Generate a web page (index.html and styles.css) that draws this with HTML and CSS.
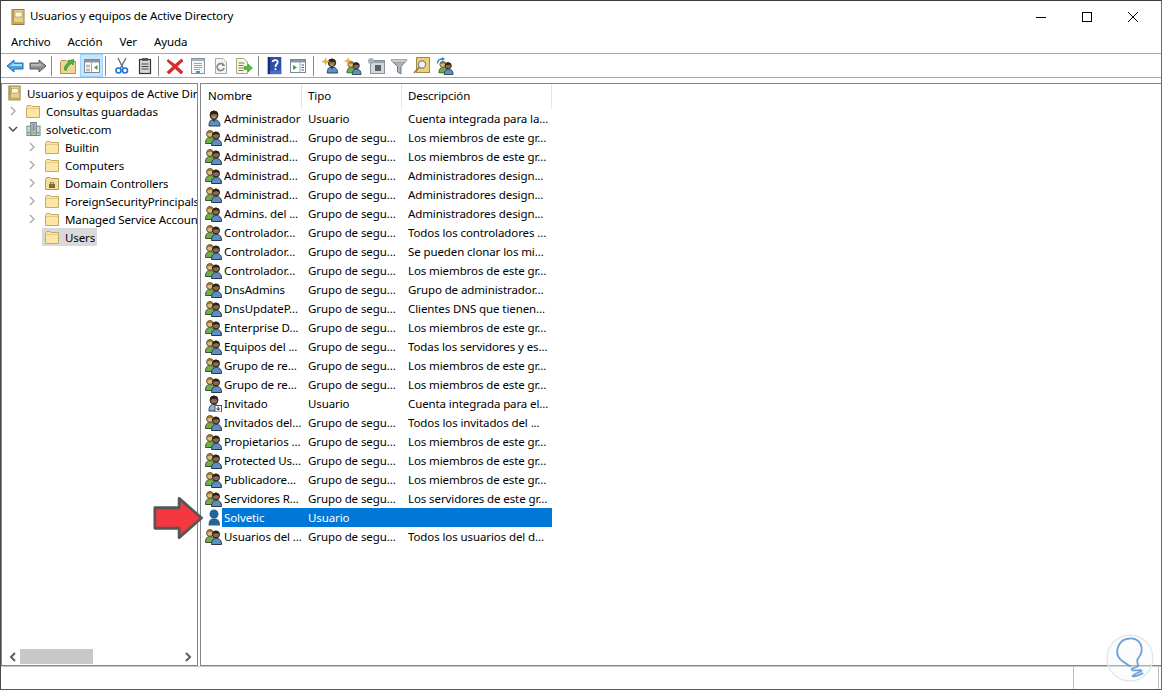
FILE: index.html
```html
<!DOCTYPE html>
<html lang="es">
<head>
<meta charset="utf-8">
<title>Usuarios y equipos de Active Directory</title>
<link rel="stylesheet" href="styles.css">
</head>
<body>
<svg class="defs" width="0" height="0" aria-hidden="true">
  <defs>
    <pattern id="dither" width="2" height="2" patternUnits="userSpaceOnUse">
      <rect width="2" height="2" fill="#2f8fe0"/>
      <rect width="1" height="1" fill="#1a2b3c"/>
      <rect x="1" y="1" width="1" height="1" fill="#24405c"/>
    </pattern>
    <symbol id="book" viewBox="0 0 14 16">
      <rect x="1" y="0.5" width="12" height="15" fill="#e8cf84" stroke="#8d7a45"/>
      <rect x="1" y="0.5" width="2" height="15" fill="#b59a52"/>
      <rect x="4" y="3" width="7" height="5" fill="#fdf8dc" stroke="#a48d4e" stroke-width=".6"/>
      <rect x="1.5" y="13" width="11" height="2" fill="#c4a85e"/>
    </symbol>
    <symbol id="folder" viewBox="0 0 14 13">
      <path d="M.5 2.5V12.5H13.5V1.5H6L5 .5H1.500Z" fill="#fbe6a6" stroke="#c8a862"/>
      <path d="M1 3.500H13" stroke="#e6cb86"/>
    </symbol>
    <symbol id="ou" viewBox="0 0 14 13">
      <path d="M.5 2.500V12.500H13.500V1.500H6L5 .5H1.500Z" fill="#f6dd9a" stroke="#b69a58"/>
      <rect x="4" y="7" width="6" height="4" fill="#7c6a3a"/>
      <rect x="5.500" y="5.500" width="3" height="2" fill="#d9c27c" stroke="#5e5030" stroke-width=".5"/>
    </symbol>
    <symbol id="domain" viewBox="0 0 16 16">
      <rect x="5" y="1" width="6" height="14" fill="#bcc3c9" stroke="#6d7680"/>
      <rect x="1" y="5" width="4" height="10" fill="#d2d7db" stroke="#7b848c"/>
      <rect x="11" y="5" width="4" height="10" fill="#d2d7db" stroke="#7b848c"/>
      <path d="M7 3h2M7 5h2M7 7h2M7 9h2" stroke="#4d5a66"/>
      <rect x="2" y="11" width="2" height="2" fill="#57c24a"/>
      <rect x="12" y="11" width="2" height="2" fill="#57c24a"/>
      <rect x="7" y="11" width="2" height="2" fill="#57c24a"/>
    </symbol>
    <symbol id="user" viewBox="0 0 16 17">
      <path d="M3.500 16c0-4 1-6.500 5-6.500s6 2.500 6 6.500Z" fill="#5c8fc4" stroke="#2a3a4c"/>
      <path d="M6.500 9.500 8.500 12 10.500 9.500Z" fill="#2a3440"/>
      <circle cx="8.500" cy="5" r="4" fill="#8a6a4c" stroke="#231e1a"/>
      <path d="M4.800 5C4.500 1.500 7 .8 8.500 .8S12.500 2 12.200 5C10.500 3.500 7 3.500 4.800 5Z" fill="#2c2218"/>
      <path d="M7 6h3v2.500H7Z" fill="#b89270"/>
    </symbol>
    <symbol id="guest" viewBox="0 0 16 17">
      <path d="M3.500 16c0-4 1-6.500 5-6.500s6 2.500 6 6.500Z" fill="#8fb2d6" stroke="#2a3a4c"/>
      <circle cx="8.500" cy="5" r="4" fill="#8a6a4c" stroke="#231e1a"/>
      <path d="M4.800 5C4.500 1.500 7 .8 8.500 .8S12.500 2 12.200 5C10.500 3.500 7 3.500 4.800 5Z" fill="#2c2218"/>
      <rect x="9.500" y="10.500" width="6.500" height="6.500" fill="#fff" stroke="#555"/>
      <path d="M12.700 11.500v3.500M11 13.500l1.700 1.700 1.700-1.700" stroke="#222" fill="none"/>
    </symbol>
    <symbol id="group" viewBox="0 0 17 17">
      <path d="M.5 14.500c0-4 1.500-6 4.500-6S9.500 10 9.500 14.500Z" fill="#6fae4a" stroke="#37552a"/>
      <circle cx="5" cy="5" r="3.400" fill="#dcb67e" stroke="#5e4e2c"/>
      <path d="M1.800 4.800C1.800 2 3.500 1.300 5 1.300S8.200 2.500 8.200 4.800C6.500 3.500 4 3.500 1.800 4.800Z" fill="#8d7430"/>
      <path d="M6.500 16.500c0-4 1.500-6 5-6s5 2 5 6Z" fill="#5c8fc4" stroke="#2a3a4c"/>
      <circle cx="11" cy="6.500" r="3.500" fill="#8a6a4c" stroke="#231e1a"/>
      <path d="M7.600 6.300C7.400 3.300 9.500 2.800 11 2.800s3.600 1 3.400 3.500C12.800 5 10 5 7.600 6.300Z" fill="#2c2218"/>
    </symbol>
    <symbol id="user-sel" viewBox="0 0 16 17">
      <path d="M3 16.500c0-4.500 1.500-7 5.500-7s6 2.500 6 7Z" fill="url(#dither)"/>
      <circle cx="8.500" cy="5" r="4.500" fill="url(#dither)"/>
    </symbol>
    <symbol id="i-back" viewBox="0 0 18 18">
      <path d="M1 9 8 3V6H17V12H8V15Z" fill="#4aa3e8" stroke="#1d6cb0"/>
      <path d="M4 9 8 5.500V7H16V9Z" fill="#a5dcff"/>
    </symbol>
    <symbol id="i-forward" viewBox="0 0 18 18">
      <path d="M17 9 10 3V6H1V12H10V15Z" fill="#8c8f94" stroke="#55585c"/>
      <path d="M2 7H10V5.500L14 9H2Z" fill="#b5b7ba"/>
    </symbol>
    <symbol id="i-up" viewBox="0 0 18 18">
      <path d="M1.500 5.500V16.500H16.500V4.500H8L7 3.500H2.500Z" fill="#f3d58f" stroke="#b69250"/>
      <path d="M5 12C6 8 8 6 10 5.500L9 3.500 15 2.500 14 8 12.500 6.500C10 8 8 10 7 14Z" fill="#46b545" stroke="#2c8030" stroke-width=".6"/>
    </symbol>
    <symbol id="i-pane" viewBox="0 0 18 18">
      <rect x="1.500" y="2.500" width="15" height="13" fill="#fff" stroke="#7b8895"/>
      <rect x="2" y="3" width="14" height="2.500" fill="#8a98a6"/>
      <path d="M8.500 6v9" stroke="#9aa5b0"/>
      <path d="M3.500 8h3v2h-3zM3.500 12h3v2h-3z" fill="#cfd6dc" stroke="#7b8895" stroke-width=".5"/>
      <path d="M14.500 8v5L11 10.500Z" fill="#3fa24a"/>
    </symbol>
    <symbol id="i-cut" viewBox="0 0 18 18">
      <path d="M5 1 10 11M13 1 7.500 11" stroke="#6b7680" stroke-width="1.500" fill="none"/>
      <circle cx="5.500" cy="13.500" r="2.500" fill="none" stroke="#1e73d2" stroke-width="1.600"/>
      <circle cx="12" cy="13.500" r="2.500" fill="none" stroke="#1e73d2" stroke-width="1.600"/>
    </symbol>
    <symbol id="i-paste" viewBox="0 0 18 18">
      <rect x="3.500" y="2.500" width="11" height="14" fill="#d9d9d9" stroke="#333" stroke-width="1.200"/>
      <rect x="6" y="1" width="6" height="3" fill="#555"/>
      <path d="M5.500 7h7M5.500 9.500h7M5.500 12h7" stroke="#444"/>
    </symbol>
    <symbol id="i-del" viewBox="0 0 18 18">
      <path d="M2 2.500 9 7.500 15.500 2 17 4 11 9.500 17 15 15 17 9 11.500 3 17 1 15 7 9.500 1 4Z" fill="#e02a2a" stroke="#a81616" stroke-width=".6"/>
    </symbol>
    <symbol id="i-props" viewBox="0 0 18 18">
      <rect x="2.500" y="1.500" width="13" height="15" fill="#f4f5f6" stroke="#8c959e"/>
      <rect x="3" y="2" width="12" height="2" fill="#aab3bb"/>
      <path d="M5 6.500h8M5 8.500h8M5 10.500h8M5 12.500h6" stroke="#9aa5b0"/>
      <rect x="7" y="14" width="4" height="2" fill="#3a92d8"/>
    </symbol>
    <symbol id="i-refresh" viewBox="0 0 18 18">
      <path d="M3.500 1.500H11L14.500 5V16.500H3.500Z" fill="#f2f3f4" stroke="#a5abb1"/>
      <path d="M12 11A3.500 3.500 0 1 1 11 7.500" stroke="#7d858d" stroke-width="1.600" fill="none"/>
      <path d="M10 5v4h3.500Z" fill="#7d858d"/>
    </symbol>
    <symbol id="i-export" viewBox="0 0 18 18">
      <path d="M1.500 1.500H9L12.500 5V16.500H1.500Z" fill="#fbf6d8" stroke="#b0a878"/>
      <path d="M3.500 6h6M3.500 8.500h5M3.500 11h5M3.500 13.500h5" stroke="#77786a"/>
      <path d="M9 9.500h4V7l4.500 4-4.500 4v-2.500H9Z" fill="#54c03f" stroke="#2e8a28" stroke-width=".5"/>
    </symbol>
    <symbol id="i-help" viewBox="0 0 18 20">
      <rect x="1" y="0" width="15" height="19" fill="#2c4fa8"/>
      <rect x="1" y="0" width="2.500" height="19" fill="#1b2f70"/>
      <rect x="3.500" y="15" width="12.500" height="4" fill="#4a6ec8"/>
      <path d="M6.500 5.500C6.500 3 12 2.500 12 5.500 12 8 9.500 8 9.500 11" stroke="#fff" stroke-width="2" fill="none"/>
      <rect x="8.500" y="12.500" width="2" height="2" fill="#fff"/>
    </symbol>
    <symbol id="i-mmc" viewBox="0 0 18 18">
      <rect x="1.500" y="2.500" width="15" height="13" fill="#fff" stroke="#7b8895"/>
      <rect x="2" y="3" width="14" height="2.500" fill="#8a98a6"/>
      <path d="M11 6v9" stroke="#9aa5b0"/>
      <path d="M4 8v5L8 10.500Z" fill="#3fa24a"/>
      <path d="M12.500 8h2.500M12.500 10.500h2.500M12.500 13h2.500" stroke="#555"/>
    </symbol>
    <symbol id="spark" viewBox="0 0 8 8">
      <path d="M4 0 5 2.800 8 4 5 5.200 4 8 3 5.200 0 4 3 2.800Z" fill="#f0b030"/>
    </symbol>
    <symbol id="i-newuser" viewBox="0 0 18 18">
      <use href="#user" x="3" y="1" width="15" height="16"/>
      <use href="#spark" x="0" y="0" width="9" height="9"/>
    </symbol>
    <symbol id="i-newgroup" viewBox="0 0 18 18">
      <use href="#group" x="2" y="3" width="16" height="15"/>
      <use href="#spark" x="0" y="0" width="8" height="8"/>
    </symbol>
    <symbol id="i-newou" viewBox="0 0 18 18">
      <rect x="3.500" y="3.500" width="14" height="13" fill="#d4d8dc" stroke="#8a9098"/>
      <rect x="8" y="8" width="6" height="6" fill="#55606a"/>
      <rect x="4" y="4" width="13" height="2" fill="#9aa2aa"/>
      <circle cx="4" cy="4" r="3" fill="#aab0b6"/>
    </symbol>
    <symbol id="i-filter" viewBox="0 0 18 18">
      <path d="M1 3H17L11 9.500V17L7.500 15V9.500Z" fill="#aab4bd" stroke="#6d7882"/>
      <path d="M1 3H17L15.500 5H2.500Z" fill="#e4e8eb" stroke="#6d7882" stroke-width=".5"/>
    </symbol>
    <symbol id="i-find" viewBox="0 0 18 18">
      <rect x="3.500" y="0.500" width="13" height="15" fill="#efcf70" stroke="#a58b45"/>
      <circle cx="9" cy="7.500" r="3.600" fill="#eef3f5" stroke="#7c8690" stroke-width="1.200"/>
      <path d="M6.500 10 1 16" stroke="#8f7a62" stroke-width="1.800"/>
    </symbol>
    <symbol id="i-adduser" viewBox="0 0 18 18">
      <use href="#group" x="2" y="3" width="16" height="15"/>
      <path d="M1.500 6.500C1.500 3 4 1.500 7 2" stroke="#1e86dc" stroke-width="1.500" fill="none"/>
      <path d="M6 0l3 2-3 2Z" fill="#1e86dc"/>
    </symbol>
  </defs>
</svg>

<div class="window">
  <header class="titlebar">
    <svg class="title-icon"><use href="#book"/></svg>
    <span class="title-text">Usuarios y equipos de Active Directory</span>
    <div class="controls">
      <svg class="ctl" viewBox="0 0 46 32"><path d="M18 16.500H28" stroke="#000"/></svg>
      <svg class="ctl" viewBox="0 0 46 32"><rect x="18.500" y="11.500" width="9" height="9" fill="none" stroke="#000"/></svg>
      <svg class="ctl" viewBox="0 0 46 32"><path d="M18 11 28 21M28 11 18 21" stroke="#000" fill="none"/></svg>
    </div>
  </header>

  <nav class="menubar">
    <span class="menu-item">Archivo</span>
    <span class="menu-item">Acción</span>
    <span class="menu-item">Ver</span>
    <span class="menu-item">Ayuda</span>
  </nav>

  <div class="toolbar">
    <span class="tb"><svg><use href="#i-back"/></svg></span>
    <span class="tb"><svg><use href="#i-forward"/></svg></span>
    <span class="sep"></span>
    <span class="tb"><svg><use href="#i-up"/></svg></span>
    <span class="tb tb-on"><svg><use href="#i-pane"/></svg></span>
    <span class="sep"></span>
    <span class="tb"><svg><use href="#i-cut"/></svg></span>
    <span class="tb"><svg><use href="#i-paste"/></svg></span>
    <span class="sep"></span>
    <span class="tb"><svg><use href="#i-del"/></svg></span>
    <span class="tb"><svg><use href="#i-props"/></svg></span>
    <span class="tb"><svg><use href="#i-refresh"/></svg></span>
    <span class="tb"><svg><use href="#i-export"/></svg></span>
    <span class="sep sep-a"></span>
    <span class="tb"><svg><use href="#i-help"/></svg></span>
    <span class="tb"><svg><use href="#i-mmc"/></svg></span>
    <span class="sep sep-b"></span>
    <span class="tb"><svg><use href="#i-newuser"/></svg></span>
    <span class="tb"><svg><use href="#i-newgroup"/></svg></span>
    <span class="tb"><svg><use href="#i-newou"/></svg></span>
    <span class="tb"><svg><use href="#i-filter"/></svg></span>
    <span class="tb"><svg><use href="#i-find"/></svg></span>
    <span class="tb"><svg><use href="#i-adduser"/></svg></span>
  </div>

  <main class="panes">
    <aside class="tree-pane">
      <ul class="tree">
        <li class="node lv0"><svg class="n-book"><use href="#book"/></svg><span class="lbl">Usuarios y equipos de Active Directory</span></li>
        <li class="node lv1"><svg class="exp" viewBox="0 0 8 10"><path d="M2 1 6 5 2 9" fill="none" stroke="#a6a6a6" stroke-width="1.300"/></svg><svg class="n-folder"><use href="#folder"/></svg><span class="lbl">Consultas guardadas</span></li>
        <li class="node lv1"><svg class="exp exp-open" viewBox="0 0 10 8"><path d="M1 2 5 6 9 2" fill="none" stroke="#404040" stroke-width="1.300"/></svg><svg class="n-domain"><use href="#domain"/></svg><span class="lbl">solvetic.com</span></li>
        <li class="node lv2"><svg class="exp" viewBox="0 0 8 10"><path d="M2 1 6 5 2 9" fill="none" stroke="#a6a6a6" stroke-width="1.300"/></svg><svg class="n-folder"><use href="#folder"/></svg><span class="lbl">Builtin</span></li>
        <li class="node lv2"><svg class="exp" viewBox="0 0 8 10"><path d="M2 1 6 5 2 9" fill="none" stroke="#a6a6a6" stroke-width="1.300"/></svg><svg class="n-folder"><use href="#folder"/></svg><span class="lbl">Computers</span></li>
        <li class="node lv2"><svg class="exp" viewBox="0 0 8 10"><path d="M2 1 6 5 2 9" fill="none" stroke="#a6a6a6" stroke-width="1.300"/></svg><svg class="n-folder"><use href="#ou"/></svg><span class="lbl">Domain Controllers</span></li>
        <li class="node lv2"><svg class="exp" viewBox="0 0 8 10"><path d="M2 1 6 5 2 9" fill="none" stroke="#a6a6a6" stroke-width="1.300"/></svg><svg class="n-folder"><use href="#folder"/></svg><span class="lbl">ForeignSecurityPrincipals</span></li>
        <li class="node lv2"><svg class="exp" viewBox="0 0 8 10"><path d="M2 1 6 5 2 9" fill="none" stroke="#a6a6a6" stroke-width="1.300"/></svg><svg class="n-folder"><use href="#folder"/></svg><span class="lbl">Managed Service Accounts</span></li>
        <li class="node lv2 node-sel"><span class="exp-blank"></span><span class="sel-box"><svg class="n-folder"><use href="#folder"/></svg><span class="lbl">Users</span></span></li>
      </ul>
      <div class="hscroll">
        <svg class="sc-arrow" viewBox="0 0 8 10"><path d="M6 1 2 5 6 9" fill="none" stroke="#606060" stroke-width="2"/></svg>
        <div class="sc-track"><div class="sc-thumb"></div></div>
        <svg class="sc-arrow" viewBox="0 0 8 10"><path d="M2 1 6 5 2 9" fill="none" stroke="#606060" stroke-width="2"/></svg>
      </div>
    </aside>

    <section class="list-pane">
      <div class="list-head">
        <span class="col col-name">Nombre</span>
        <span class="col col-type">Tipo</span>
        <span class="col col-desc">Descripción</span>
      </div>
      <div class="row"><svg class="ic"><use href="#user"/></svg><div class="cells"><span class="c-name">Administrador</span><span class="c-type">Usuario</span><span class="c-desc">Cuenta integrada para la...</span></div></div>
      <div class="row"><svg class="ic"><use href="#group"/></svg><div class="cells"><span class="c-name">Administrad...</span><span class="c-type">Grupo de segu...</span><span class="c-desc">Los miembros de este gr...</span></div></div>
      <div class="row"><svg class="ic"><use href="#group"/></svg><div class="cells"><span class="c-name">Administrad...</span><span class="c-type">Grupo de segu...</span><span class="c-desc">Los miembros de este gr...</span></div></div>
      <div class="row"><svg class="ic"><use href="#group"/></svg><div class="cells"><span class="c-name">Administrad...</span><span class="c-type">Grupo de segu...</span><span class="c-desc">Administradores design...</span></div></div>
      <div class="row"><svg class="ic"><use href="#group"/></svg><div class="cells"><span class="c-name">Administrad...</span><span class="c-type">Grupo de segu...</span><span class="c-desc">Administradores design...</span></div></div>
      <div class="row"><svg class="ic"><use href="#group"/></svg><div class="cells"><span class="c-name">Admins. del ...</span><span class="c-type">Grupo de segu...</span><span class="c-desc">Administradores design...</span></div></div>
      <div class="row"><svg class="ic"><use href="#group"/></svg><div class="cells"><span class="c-name">Controlador...</span><span class="c-type">Grupo de segu...</span><span class="c-desc">Todos los controladores ...</span></div></div>
      <div class="row"><svg class="ic"><use href="#group"/></svg><div class="cells"><span class="c-name">Controlador...</span><span class="c-type">Grupo de segu...</span><span class="c-desc">Se pueden clonar los mi...</span></div></div>
      <div class="row"><svg class="ic"><use href="#group"/></svg><div class="cells"><span class="c-name">Controlador...</span><span class="c-type">Grupo de segu...</span><span class="c-desc">Los miembros de este gr...</span></div></div>
      <div class="row"><svg class="ic"><use href="#group"/></svg><div class="cells"><span class="c-name">DnsAdmins</span><span class="c-type">Grupo de segu...</span><span class="c-desc">Grupo de administrador...</span></div></div>
      <div class="row"><svg class="ic"><use href="#group"/></svg><div class="cells"><span class="c-name">DnsUpdateP...</span><span class="c-type">Grupo de segu...</span><span class="c-desc">Clientes DNS que tienen...</span></div></div>
      <div class="row"><svg class="ic"><use href="#group"/></svg><div class="cells"><span class="c-name">Enterprise D...</span><span class="c-type">Grupo de segu...</span><span class="c-desc">Los miembros de este gr...</span></div></div>
      <div class="row"><svg class="ic"><use href="#group"/></svg><div class="cells"><span class="c-name">Equipos del ...</span><span class="c-type">Grupo de segu...</span><span class="c-desc">Todas los servidores y es...</span></div></div>
      <div class="row"><svg class="ic"><use href="#group"/></svg><div class="cells"><span class="c-name">Grupo de re...</span><span class="c-type">Grupo de segu...</span><span class="c-desc">Los miembros de este gr...</span></div></div>
      <div class="row"><svg class="ic"><use href="#group"/></svg><div class="cells"><span class="c-name">Grupo de re...</span><span class="c-type">Grupo de segu...</span><span class="c-desc">Los miembros de este gr...</span></div></div>
      <div class="row"><svg class="ic"><use href="#guest"/></svg><div class="cells"><span class="c-name">Invitado</span><span class="c-type">Usuario</span><span class="c-desc">Cuenta integrada para el...</span></div></div>
      <div class="row"><svg class="ic"><use href="#group"/></svg><div class="cells"><span class="c-name">Invitados del...</span><span class="c-type">Grupo de segu...</span><span class="c-desc">Todos los invitados del ...</span></div></div>
      <div class="row"><svg class="ic"><use href="#group"/></svg><div class="cells"><span class="c-name">Propietarios ...</span><span class="c-type">Grupo de segu...</span><span class="c-desc">Los miembros de este gr...</span></div></div>
      <div class="row"><svg class="ic"><use href="#group"/></svg><div class="cells"><span class="c-name">Protected Us...</span><span class="c-type">Grupo de segu...</span><span class="c-desc">Los miembros de este gr...</span></div></div>
      <div class="row"><svg class="ic"><use href="#group"/></svg><div class="cells"><span class="c-name">Publicadore...</span><span class="c-type">Grupo de segu...</span><span class="c-desc">Los miembros de este gr...</span></div></div>
      <div class="row"><svg class="ic"><use href="#group"/></svg><div class="cells"><span class="c-name">Servidores R...</span><span class="c-type">Grupo de segu...</span><span class="c-desc">Los servidores de este gr...</span></div></div>
      <div class="row row-sel"><svg class="ic"><use href="#user-sel"/></svg><div class="cells"><span class="c-name">Solvetic</span><span class="c-type">Usuario</span><span class="c-desc"></span></div></div>
      <div class="row"><svg class="ic"><use href="#group"/></svg><div class="cells"><span class="c-name">Usuarios del ...</span><span class="c-type">Grupo de segu...</span><span class="c-desc">Todos los usuarios del d...</span></div></div>
    </section>
  </main>

  <footer class="statusbar">
    <span class="st st-main"></span>
    <span class="st st-mid"></span>
    <span class="st st-end"></span>
  </footer>
</div>

<svg class="red-arrow" viewBox="0 0 60 46"><path d="M2 12H28V2L52 23 28 44V34H2Z" fill="#f5383f" stroke="#565656" stroke-width="3" stroke-linejoin="round"/></svg>
<svg class="watermark" viewBox="0 0 60 60">
  <circle cx="30" cy="29" r="25.500" fill="#f4f6f8" fill-opacity=".35" stroke="#dfe6ec" stroke-width="1.500"/>
  <path d="M30 38C27 36 24 34 21 32 17 29 15 24 16 19 18 11 24 7 31 7 38 7 43 12 43 20 43 25 39 29 38 31 38 34 39 36 39 38 36 40 31 40 32 42 34 44 43 41 43 43 42 45 34 46 33 49 36 50 42 47 44 46" fill="none" stroke="#6fa0d6" stroke-width="2" stroke-linecap="round"/>
</svg>
</body>
</html>
```
FILE: styles.css
```css
* { box-sizing: border-box; }
html, body { margin: 0; padding: 0; height: 100%; }
body {
  width: 1162px;
  height: 690px;
  overflow: hidden;
  position: relative;
  background: #fff;
  font-family: "Noto Sans", "Open Sans", sans-serif;
  font-size: 11.5px;
  letter-spacing: -0.1px;
  color: #000;
}
.defs { position: absolute; }
.window {
  width: 1162px;
  height: 690px;
  display: flex;
  flex-direction: column;
  border-top: 1px solid #3a3a3a;
  border-left: 1px solid #4a4a4a;
  border-right: 1px solid #6a6a6a;
  border-bottom: 1px solid #5a5a5a;
  background: #fff;
}
.titlebar {
  height: 31px;
  display: flex;
  align-items: center;
  padding-left: 10px;
}
.title-icon { width: 14px; height: 16px; margin-right: 5px; }
.title-text { flex: 1; margin-bottom: 2px; }
.controls { display: flex; margin-right: 5px; margin-top: 1px; }
.ctl { width: 46px; height: 32px; }
.menubar {
  height: 22px;
  display: flex;
  align-items: center;
  padding-left: 10px;
  gap: 17px;
  border-bottom: 1px solid #a8a8a8;
  padding-bottom: 3px;
}
.toolbar {
  height: 24px;
  display: flex;
  align-items: center;
  padding-left: 2px;
  border-bottom: 1px solid #a8a8a8;
}
.tb {
  width: 23px;
  height: 23px;
  display: flex;
  align-items: center;
  justify-content: center;
  border: 1px solid transparent;
  flex: none;
}
.tb svg { width: 18px; height: 18px; }
.tb-on { background: #cce4f7; border-color: #99d1ff; margin-left: 1px; }
.sep { width: 1px; height: 20px; background: #8a8a8a; margin: 0 4px 0 2px; flex: none; }
.sep-a { margin-left: 3px; }
.sep-b { margin-left: 4px; }
.panes {
  flex: 1;
  min-height: 0;
  display: flex;
  gap: 2px;
  margin-top: 5px;
  border-bottom: 1px solid #c8c8c8;
}
.tree-pane {
  width: 197px;
  border: 1px solid #82878f;
  display: flex;
  flex-direction: column;
  overflow: hidden;
}
.tree { list-style: none; margin: 0; padding: 0; flex: 1; min-height: 0; }
.node { height: 18px; display: flex; align-items: center; white-space: nowrap; overflow: hidden; }
.lbl { display: block; min-width: 0; overflow: hidden; }
.lv0 { padding-left: 6px; }
.lv1 { padding-left: 7px; }
.lv2 { padding-left: 26px; }
.n-book { width: 13px; height: 16px; margin-right: 6px; flex: none; }
.exp { width: 8px; height: 10px; margin-right: 9px; flex: none; }
.exp-open { width: 10px; height: 8px; margin: 0 8px 0 -1px; }
.exp-blank { width: 8px; height: 10px; margin-right: 6px; flex: none; }
.n-folder { width: 14px; height: 13px; margin-right: 6px; flex: none; }
.n-domain { width: 15px; height: 16px; margin-right: 5px; flex: none; }
.sel-box {
  display: flex;
  align-items: center;
  height: 18px;
  width: 55px;
  padding-left: 3px;
  background: #d9d9d9;
}
.hscroll {
  height: 15px;
  margin-bottom: 1px;
  display: flex;
  align-items: center;
  padding: 0 5px 0 7px;
}
.sc-arrow { width: 8px; height: 10px; flex: none; }
.sc-track { flex: 1; height: 15px; padding-left: 3px; }
.sc-thumb { width: 73px; height: 15px; background: #c8c8c8; }
.list-pane {
  flex: 1;
  min-width: 0;
  border: 1px solid #82878f;
  border-right: 0;
  overflow: hidden;
}
.list-head { height: 25px; display: flex; align-items: flex-start; }
.col { height: 25px; display: flex; align-items: center; padding: 0 0 2px 6px; border-right: 1px solid #e5e5e5; }
.col-name { width: 101px; padding-left: 7px; }
.col-type { width: 100px; }
.col-desc { width: 150px; }
.row { height: 19px; display: flex; align-items: center; padding-left: 4px; }
.ic { width: 17px; height: 17px; flex: none; }
.cells {
  width: 330px;
  height: 19px;
  display: flex;
  align-items: center;
  padding-left: 2px;
  white-space: nowrap;
  overflow: hidden;
}
.c-name { width: 84px; flex: none; overflow: hidden; }
.c-type { width: 100px; flex: none; overflow: hidden; }
.c-desc { width: 144px; flex: none; overflow: hidden; }
.row-sel .cells { background: #0078d7; color: #fff; }
.statusbar { height: 22px; display: flex; }
.st { height: 22px; }
.st-main { width: 1072px; }
.st-mid { width: 85px; border-left: 1px solid #c0c0c0; }
.st-end { flex: 1; border-left: 1px solid #c0c0c0; }
.red-arrow { position: absolute; left: 153px; top: 496px; width: 56px; height: 44px; }
.watermark { position: absolute; left: 1103px; top: 632px; width: 54px; height: 54px; }
```
